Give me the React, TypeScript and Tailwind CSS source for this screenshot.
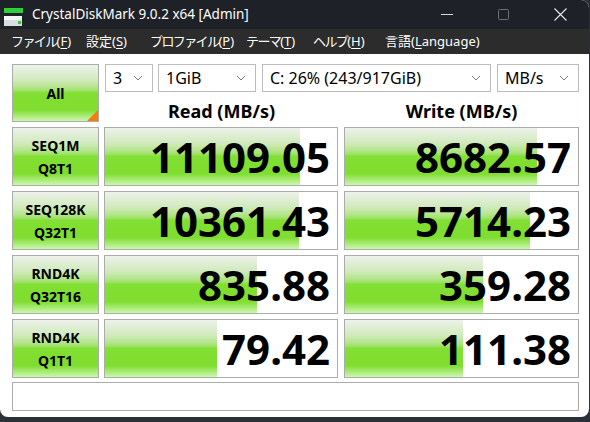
import React from "react";

const rows = [
  { name: "SEQ1M", sub: "Q8T1", read: "11109.05", write: "8682.57" },
  { name: "SEQ128K", sub: "Q32T1", read: "10361.43", write: "5714.23" },
  { name: "RND4K", sub: "Q32T16", read: "835.88", write: "359.28" },
  { name: "RND4K", sub: "Q1T1", read: "79.42", write: "111.38" },
];

const greenBg =
  "bg-[linear-gradient(to_bottom,#eef2ec_0%,#cfeab9_28%,#a9e377_44%,#82df33_50%,#7fde2f_80%,#cdf6b1_100%)]";

// log scale like CDM: 10^-1 .. 10^5
function barWidth(v: string) {
  const n = parseFloat(v);
  const p = ((Math.log10(n) + 1) / 6) * 100;
  return Math.max(0, Math.min(100, p));
}

function Chevron() {
  return (
    <svg width="10" height="6" viewBox="0 0 10 6" className="shrink-0">
      <path d="M1 1 L5 5 L9 1" fill="none" stroke="#7a7a7a" strokeWidth="1" />
    </svg>
  );
}

function Select({ label, w }: { label: string; w: string }) {
  return (
    <div
      className={`${w} h-[28px] flex items-center justify-between pl-[7px] pr-[9px] bg-white border border-[#bcbcbc] text-[16px] text-black`}
    >
      <span>{label}</span>
      <Chevron />
    </div>
  );
}

function Menu({ text, k, after, w, tight }: { text: string; k: string; after?: string; w: string; tight?: boolean }) {
  return (
    <span className={`${w} shrink-0 whitespace-nowrap`}>
      <span className={tight ? "tracking-[-1.6px]" : ""}>{text}</span>(
      <span className="underline underline-offset-2">{k}</span>
      {after})
    </span>
  );
}

function Cell({ value, w }: { value: string; w: string }) {
  return (
    <div className={`${w} relative h-full bg-white border border-[#acacac] overflow-hidden`}>
      <div
        className={`absolute left-0 top-0 bottom-0 ${greenBg}`}
        style={{ width: `${barWidth(value)}%` }}
      />
      <div className="relative h-full flex items-center justify-end pr-[7px] text-[42px] font-bold leading-none text-black">
        {value}
      </div>
    </div>
  );
}

export default function App() {
  return (
    <div className="w-[590px] h-[422px] bg-[#2a2f38] overflow-hidden" style={{ fontFamily: '"Noto Sans", "Noto Sans CJK JP", sans-serif' }}>
      <div className="w-[589px] h-[417px] bg-white rounded-tr-[8px] rounded-b-[8px] overflow-hidden flex flex-col">
        {/* title bar */}
        <div className="h-[29px] bg-[#1e2127] flex items-center text-white shrink-0">
          <svg width="20" height="22" viewBox="0 0 20 22" className="ml-[4px]">
            <rect x="0" y="4" width="19" height="5" fill="#2fcf3a" />
            <rect x="0" y="12" width="18" height="11" rx="1" fill="#d8dde0" />
            <rect x="0" y="12" width="18" height="4" fill="#f4f6f7" />
            <rect x="14" y="17" width="3" height="3" fill="#38c43c" />
          </svg>
          <span className="ml-[8px] text-[13.5px]">CrystalDiskMark 9.0.2 x64 [Admin]</span>
          <div className="ml-auto flex h-full">
            <div className="w-[57px] flex items-center justify-center">
              <svg width="12" height="2" viewBox="0 0 12 2">
                <rect x="0" y="0" width="12" height="1" fill="#d8d8d8" />
              </svg>
            </div>
            <div className="w-[57px] flex items-center justify-center">
              <svg width="12" height="12" viewBox="0 0 12 12">
                <rect x="0.5" y="0.5" width="10" height="10" rx="1" fill="none" stroke="#6c6f74" />
              </svg>
            </div>
            <div className="w-[57px] flex items-center justify-center">
              <svg width="13" height="13" viewBox="0 0 13 13">
                <path d="M0.5 0.5 L12.5 12.5 M12.5 0.5 L0.5 12.5" stroke="#e8e8e8" strokeWidth="1.1" />
              </svg>
            </div>
          </div>
        </div>
        {/* menu bar */}
        <div className="h-[25px] bg-[#2c2c2c] flex items-center pl-[11px] text-[13px] text-white shrink-0">
          <Menu text="ファイル" k="F" w="w-[75px]" tight />
          <Menu text="設定" k="S" w="w-[64px]" />
          <Menu text="プロファイル" k="P" w="w-[96px]" tight />
          <Menu text="テーマ" k="T" w="w-[67px]" tight />
          <Menu text="ヘルプ" k="H" w="w-[72px]" tight />
          <Menu text="言語" k="L" after="anguage" w="w-[110px]" />
        </div>

        {/* content */}
        <div className="flex-1 pl-[12px] pt-[10px] flex flex-col">
          <div className="flex h-[58px]">
            <div className={`relative w-[87px] h-full border border-[#acacac] ${greenBg} flex items-center justify-center text-[14px] font-bold text-black`}>
              All
              <div className="absolute right-0 bottom-0 w-0 h-0 border-l-[11px] border-l-transparent border-b-[11px] border-b-[#f77b0c]" />
            </div>
            <div className="ml-[6px] flex flex-col">
              <div className="flex gap-[5px]">
                <Select label="3" w="w-[48px]" />
                <Select label="1GiB" w="w-[98px]" />
                <div className="ml-[1px]">
                  <Select label="C: 26% (243/917GiB)" w="w-[229px]" />
                </div>
                <div className="ml-[1px]">
                  <Select label="MB/s" w="w-[82px]" />
                </div>
              </div>
              <div className="flex h-[30px] items-end text-[18px] font-bold text-black leading-[22px]">
                <div className="w-[233px] text-center">Read (MB/s)</div>
                <div className="ml-[6px] w-[235px] text-center">Write (MB/s)</div>
              </div>
            </div>
          </div>

          <div className="mt-[5px] flex flex-col gap-[5px]">
            {rows.map((r, i) => (
              <div key={i} className="flex h-[59px]">
                <div className={`w-[87px] h-full border border-[#acacac] ${greenBg} flex flex-col items-center justify-center text-[14px] font-bold leading-[23px] text-black`}>
                  <span>{r.name}</span>
                  <span>{r.sub}</span>
                </div>
                <div className="ml-[5px]">
                  <Cell value={r.read} w="w-[234px]" />
                </div>
                <div className="ml-[6px]">
                  <Cell value={r.write} w="w-[235px]" />
                </div>
              </div>
            ))}
          </div>

          <div className="mt-[4px] w-[567px] h-[29px] bg-white border border-[#acacac]" />
        </div>
      </div>
    </div>
  );
}
